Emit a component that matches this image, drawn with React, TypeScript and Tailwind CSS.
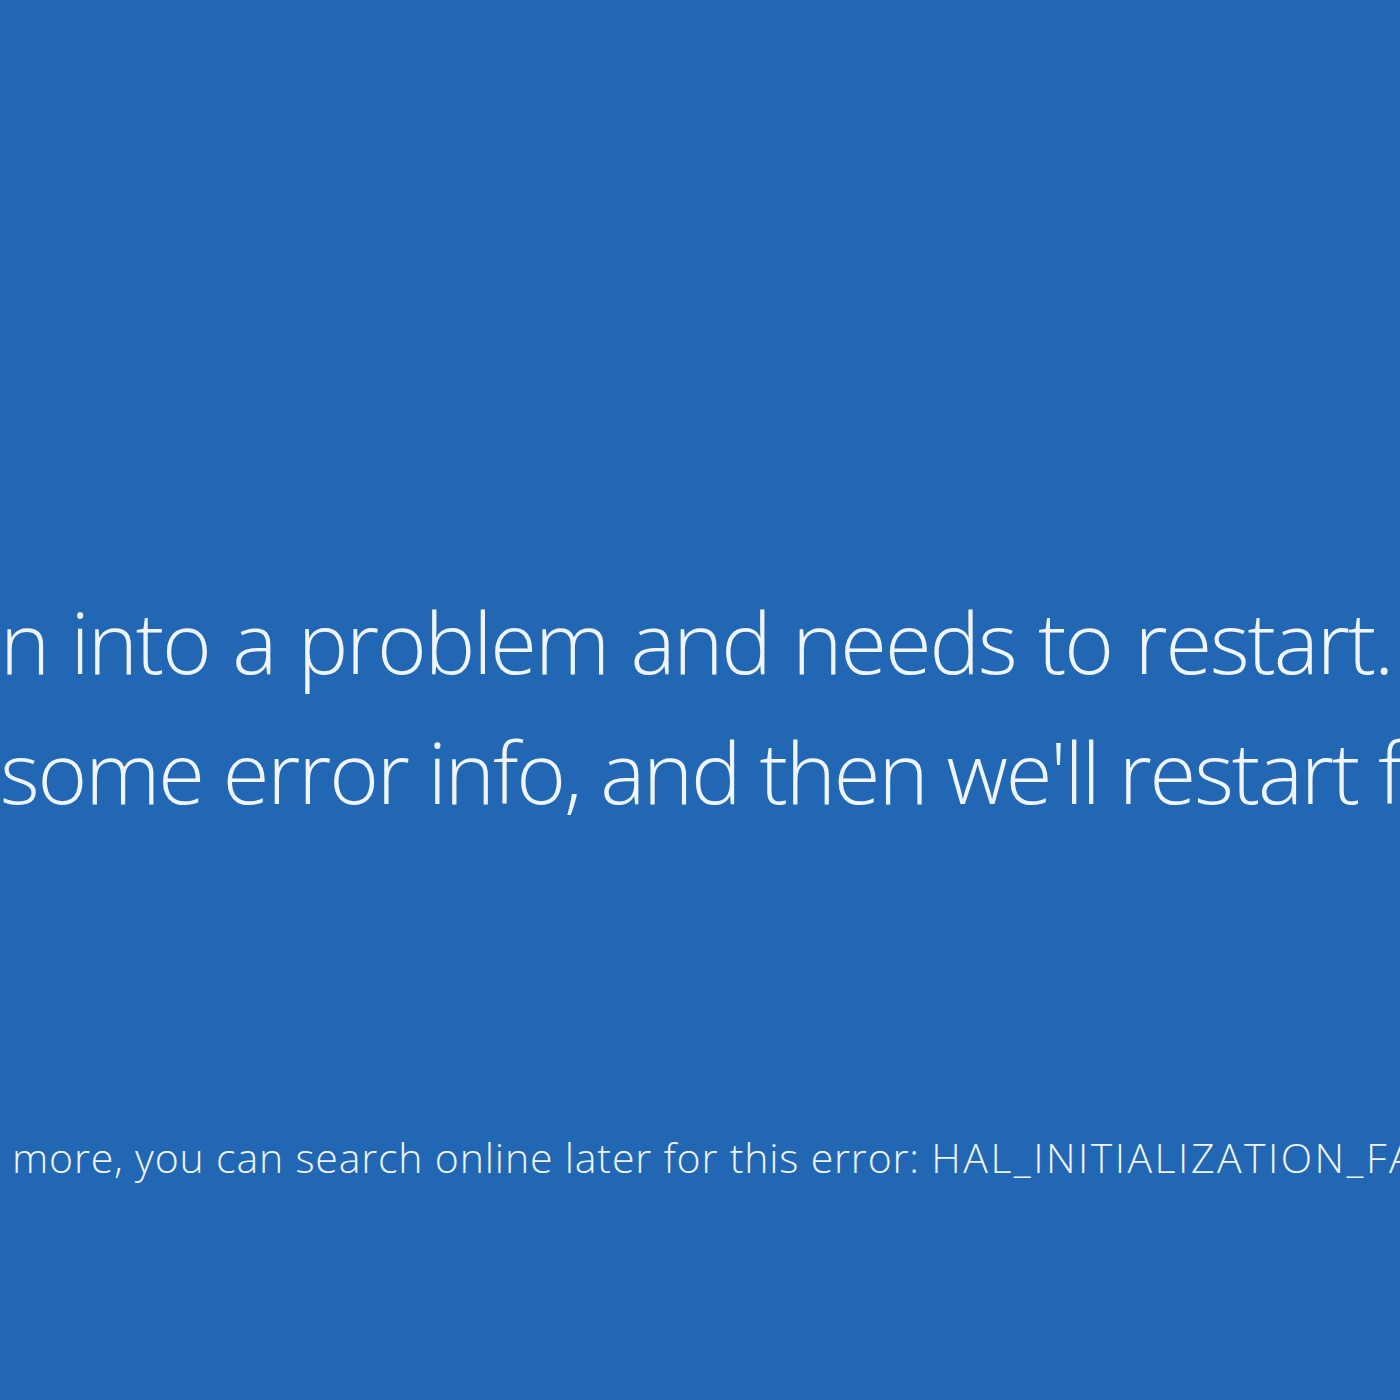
export default function App() {
  return (
    <div
      className="w-[1400px] h-[1400px] overflow-hidden bg-[#2267b3] text-[#f0f5fb]"
      style={{ fontFamily: '"Open Sans", "Noto Sans", sans-serif' }}
    >
      <div className="pt-[576px] flex flex-col">
        <div className="flex whitespace-nowrap text-[85px] leading-[130px] font-light tracking-[-0.025em] [word-spacing:0.03em]">
          <span className="w-0 flex justify-end">Your PC ra</span>
          <span>n into a problem and needs to restart. We're just</span>
        </div>
        <div className="flex whitespace-nowrap text-[85px] leading-[130px] font-light tracking-[-0.025em]">
          <span className="w-0 flex justify-end">collecting&nbsp;</span>
          <span>some error info, and then we'll restart for you.</span>
        </div>
        <div className="mt-[291px] pl-[12px] flex whitespace-nowrap text-[41px] leading-[60px] font-light tracking-[0.02em]">
          <span className="w-0 flex justify-end">If you'd like to know&nbsp;</span>
          <span>
            more, you can search online later for this error:{" "}
            <span className="tracking-[0.06em]">HAL_INITIALIZATION_FAILED</span>
          </span>
        </div>
      </div>
    </div>
  );
}
